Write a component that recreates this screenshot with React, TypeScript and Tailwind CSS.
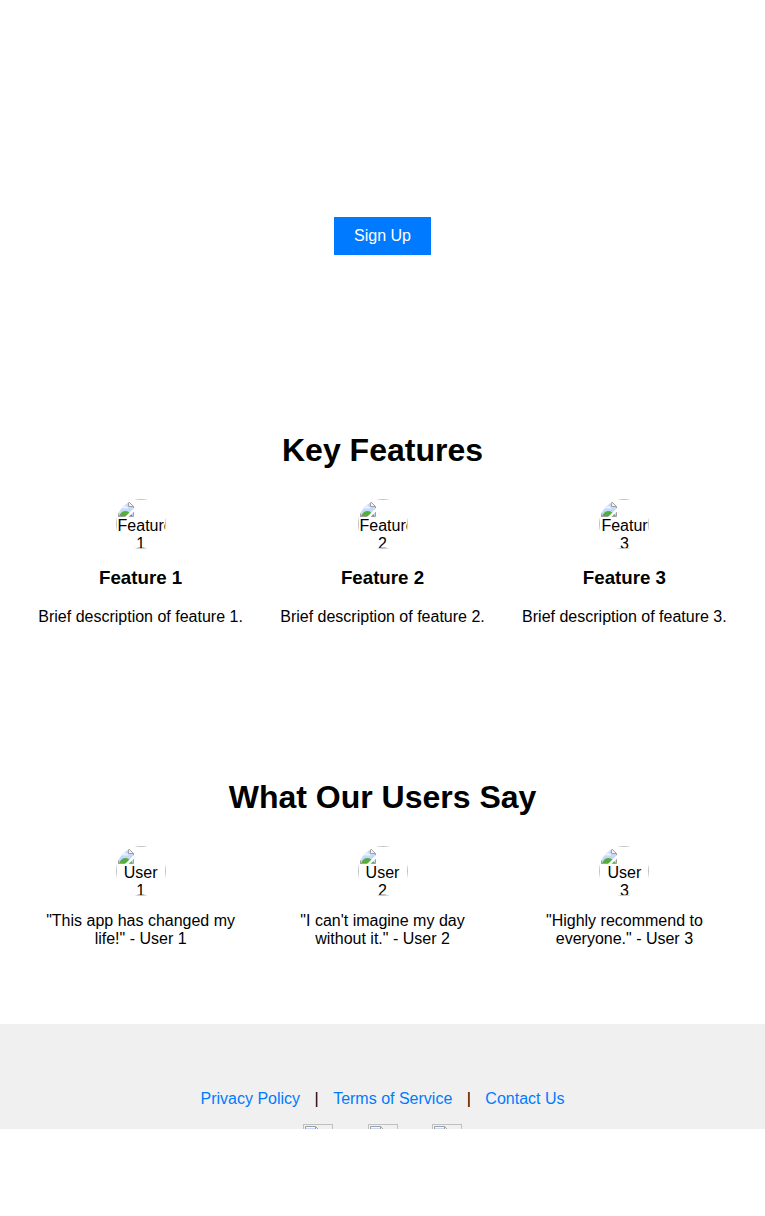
const features = [1, 2, 3];
const users = [
  { id: 1, quote: '"This app has changed my life!" - User 1' },
  { id: 2, quote: '"I can\'t imagine my day without it." - User 2' },
  { id: 3, quote: '"Highly recommend to everyone." - User 3' },
];

function MissingPicture() {
  return (
    <svg width="16" height="16" viewBox="0 0 16 16" className="block shrink-0" aria-hidden="true">
      <path d="M.5.5h10l5 5v10H.5z" fill="#c3d8fb" />
      <path d="M1 1h10v1H1z" fill="#f4f8ff" />
      <path d="M3 7.500c0-1.500 1-2 2-2 .5-1.500 3-1.500 3.500 0 1.500 0 2 .8 2 2z" fill="#eaf2ff" />
      <path d="M1 15.500c1-3 3-5.500 6-5.500s6 2 8 5.500z" fill="#55ad3d" />
      <path d="M.5 16V.5h10l5 5v2M15.500 11v4.500H.5" fill="none" stroke="#a0a0a0" />
      <path d="M10.500.5v5h5z" fill="#f4f4f4" stroke="#a0a0a0" />
      <path d="M16 7v3.500L10.500 16H7z" fill="#fff" />
    </svg>
  );
}

function Avatar({ label }: { label: string }) {
  return (
    <div className="mx-auto h-[50px] w-[50px] overflow-hidden rounded-full">
      <div className="h-[50px] w-[50px] overflow-hidden border border-[#c0c0c0] p-px">
        <MissingPicture />
        <div className="leading-[18px]">{label}</div>
      </div>
    </div>
  );
}

function SocialIcon() {
  return (
    <div className="h-[30px] w-[30px] shrink-0 border border-[#c0c0c0] p-px">
      <MissingPicture />
    </div>
  );
}

export default function App() {
  return (
    <div className="h-[1216px] overflow-hidden bg-white text-center font-['Liberation_Sans',Arial,sans-serif] text-base leading-[18px] text-black">
      <header className="h-[400px] pt-[217px]">
        <button className="h-[38px] bg-[#007bff] px-5 text-white">Sign Up</button>
      </header>
      <section className="h-[347px] px-[19.65px] pt-8">
        <h2 className="text-[32px] leading-[37px] font-bold">Key Features</h2>
        <div className="mt-[30px] grid grid-cols-[241.91px_241.91px_241.91px]">
          {features.map((n) => (
            <article key={n}>
              <Avatar label={`Feature ${n}`} />
              <h3 className="mt-[18px] text-[18.72px] leading-[21px] font-bold">Feature {n}</h3>
              <p className="mt-5">Brief description of feature {n}.</p>
            </article>
          ))}
        </div>
      </section>
      <section className="h-[277px] px-[19.65px] pt-8">
        <h2 className="text-[32px] leading-[37px] font-bold">What Our Users Say</h2>
        <div className="mt-[30px] grid grid-cols-[241.91px_241.91px_241.91px]">
          {users.map((u) => (
            <article key={u.id} className="px-5">
              <Avatar label={`User ${u.id}`} />
              <p className="mt-4">{u.quote}</p>
            </article>
          ))}
        </div>
      </section>
      <footer className="h-[105px] overflow-hidden bg-[#f0f0f0] pt-[66px]">
        <nav>
          <a href="#" className="mx-[10px] text-[#007bff]">Privacy Policy</a> |{' '}
          <a href="#" className="mx-[10px] text-[#007bff]">Terms of Service</a> |{' '}
          <a href="#" className="mx-[10px] text-[#007bff]">Contact Us</a>
        </nav>
        <div className="mt-4 flex justify-center gap-[34.45px]">
          <SocialIcon />
          <SocialIcon />
          <SocialIcon />
        </div>
      </footer>
    </div>
  );
}
